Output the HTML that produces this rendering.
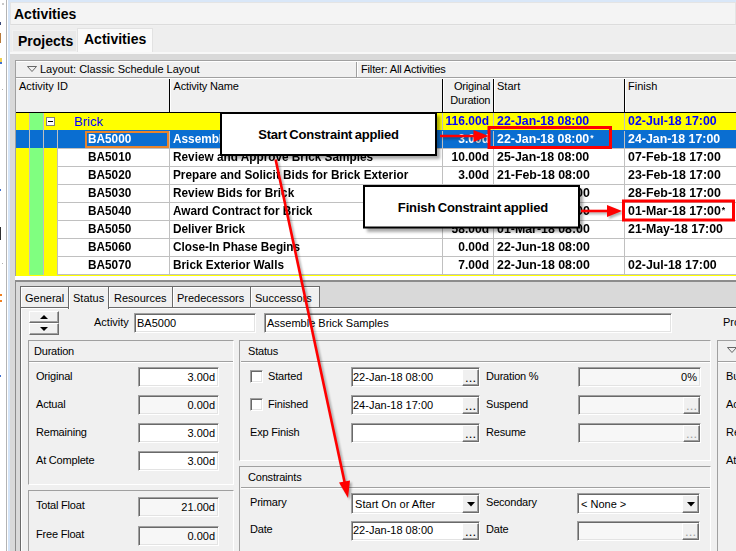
<!DOCTYPE html>
<html><head><meta charset="utf-8">
<style>
*{box-sizing:border-box;margin:0;padding:0}
html,body{width:736px;height:551px;overflow:hidden;background:#f0f0f0}
body{position:relative;font-family:"Liberation Sans",sans-serif;font-size:12px;color:#000}
.a{position:absolute}
.t{position:absolute;white-space:nowrap;line-height:14px}
.b{font-weight:bold}
.hl{position:absolute;height:1px}
.vl{position:absolute;width:1px}
.inp{position:absolute;background:#fff;border:1px solid;border-color:#a0a0a0 #fff #fff #a0a0a0;box-shadow:inset 1px 1px 0 #696969,inset -1px -1px 0 #e3e3e3}
.ro{background:#f7f7f7}
.btn{position:absolute;background:#f0f0f0;border:1px solid;border-color:#fff #6d6d6d #6d6d6d #fff;box-shadow:inset -1px -1px 0 #a0a0a0}
.grp{position:absolute;border:1px solid;border-color:#a0a0a0 #fff #fff #a0a0a0}
.row{position:absolute;left:58px;width:678px;height:18px;border-bottom:1px solid #c0c0c0;background:#fff}
.g{position:absolute;font-weight:bold;white-space:nowrap;line-height:14px;font-size:13px}
.gi,.gn{transform:scaleX(.907);transform-origin:0 0}.gt{transform:scaleX(.952);transform-origin:0 0}.gd{transform:scaleX(.925);transform-origin:100% 0}
.tab{background:#f0f0f0;border:1px solid #6a6a6a;box-shadow:inset 1px 1px 0 #fff}
.f{font-size:11px}
.r{text-align:right}
.l{letter-spacing:-0.2px}
.as{font-size:9px;position:relative;top:-2px;left:1px}
</style></head><body>
<!-- SECTION: chrome -->
<div class="a" style="left:0;top:0;width:8px;height:551px;background:#fff"></div>
<div class="a" style="left:6px;top:0;width:1px;height:551px;background:#b4b4b4"></div>
<div class="a" style="left:8px;top:0;width:2px;height:551px;background:#d5e5f8"></div>
<div class="a" style="left:10px;top:0;width:726px;height:2px;background:#d9e7f8"></div>
<div class="a" style="left:2px;top:3px;width:2px;height:2px;background:#c8c8c8"></div>
<div class="a" style="left:0;top:22px;width:1px;height:3px;background:#3a4a7a"></div>
<div class="a" style="left:0;top:33px;width:1px;height:10px;background:#b87a3a"></div>
<div class="a" style="left:0;top:58px;width:2px;height:4px;background:#f0d050"></div>
<div class="a" style="left:0;top:62px;width:2px;height:2px;background:#4070d0"></div>
<div class="a" style="left:2px;top:89px;width:1px;height:1px;background:#b0b0b0"></div>
<div class="a" style="left:0;top:189px;width:1px;height:2px;background:#4070d0"></div>
<div class="a" style="left:0;top:227px;width:1px;height:13px;background:#303030"></div>
<div class="a" style="left:2px;top:263px;width:1px;height:1px;background:#b0b0b0"></div>
<div class="a" style="left:0;top:294px;width:2px;height:2px;background:#f08020"></div>
<div class="a" style="left:0;top:300px;width:2px;height:2px;background:#f08020"></div>
<div class="a" style="left:0;top:375px;width:1px;height:2px;background:#4070d0"></div>
<div class="a" style="left:10px;top:2px;width:726px;height:23px;background:#f4f4f4;border:1px solid #e4e4e4;border-bottom-color:#dcdcdc"></div>
<div class="t b" style="left:14px;top:6px;font-size:14px;line-height:16px">Activities</div>
<!-- top tabs -->
<div class="a" style="left:10px;top:26px;width:726px;height:26px;background:#eeeeee"></div>
<div class="a" style="left:12px;top:30px;width:65px;height:22px;background:#e9e9e9;border:1px solid #f2f2f2"></div>
<div class="a" style="left:77px;top:28px;width:76px;height:25px;background:#fafafa;border:1px solid #e2e2e2;border-bottom:none"></div>
<div class="t b" style="left:18px;top:33px;font-size:14px;line-height:16px">Projects</div>
<div class="t b" style="left:84px;top:31px;font-size:14px;line-height:16px">Activities</div>
<!-- gray work area -->
<div class="a" style="left:10px;top:52px;width:726px;height:2px;background:#f8f8f8"></div>
<div class="a" style="left:10px;top:54px;width:726px;height:228px;background:#d9d9d9"></div>
<!-- SECTION: gridpanel -->
<div class="a" style="left:15px;top:60px;width:721px;height:217px;background:#f0f0f0;border-left:1px solid #a0a0a0;border-top:1px solid #a0a0a0"></div>
<div class="hl" style="left:16px;top:61px;width:720px;background:#fff"></div>
<div class="hl" style="left:16px;top:77px;width:720px;background:#a0a0a0"></div>
<div class="hl" style="left:16px;top:78px;width:720px;background:#fff"></div>
<div class="vl" style="left:356px;top:62px;height:15px;background:#a0a0a0"></div>
<div class="vl" style="left:357px;top:62px;height:15px;background:#fff"></div>
<svg class="a" style="left:26px;top:65px" width="12" height="8" viewBox="0 0 12 8"><path d="M1.5 1.5 L10.5 1.5 L6 6.5 Z" fill="none" stroke="#444" stroke-width="0.8"/></svg>
<div class="t f" style="left:40px;top:62px">Layout: Classic Schedule Layout</div>
<div class="t f" style="left:361px;top:62px;letter-spacing:-0.15px">Filter: All Activities</div>
<!-- header cells -->
<div class="vl" style="left:169px;top:79px;height:33px;background:#000"></div>
<div class="vl" style="left:442px;top:79px;height:33px;background:#000"></div>
<div class="vl" style="left:493px;top:79px;height:33px;background:#000"></div>
<div class="vl" style="left:624px;top:79px;height:33px;background:#000"></div>
<div class="vl" style="left:170px;top:79px;height:33px;background:#fff"></div>
<div class="vl" style="left:443px;top:79px;height:33px;background:#fff"></div>
<div class="vl" style="left:494px;top:79px;height:33px;background:#fff"></div>
<div class="vl" style="left:625px;top:79px;height:33px;background:#fff"></div>
<div class="hl" style="left:16px;top:112px;width:720px;background:#000"></div>
<div class="t f" style="left:19px;top:79px">Activity ID</div>
<div class="t f" style="left:173.5px;top:79px;letter-spacing:-0.15px">Activity Name</div>
<div class="t f l" style="left:390px;top:79px;width:100.3px;text-align:right">Original<br>Duration</div>
<div class="t f" style="left:497px;top:79px">Start</div>
<div class="t f" style="left:628px;top:79px">Finish</div>
<!-- SECTION: grid -->
<div class="a" style="left:16px;top:113px;width:720px;height:162px;background:#ffff00"></div>
<div class="a" style="left:30px;top:113px;width:14px;height:162px;background:#80ff80"></div>
<div class="vl" style="left:29px;top:113px;height:162px;background:#c0c0c0"></div>
<div class="vl" style="left:43px;top:113px;height:162px;background:#c0c0c0"></div>
<div class="vl" style="left:57px;top:131px;height:144px;background:#c0c0c0"></div>
<!-- brick row -->
<div class="a" style="left:46px;top:117px;width:9px;height:9px;background:#fff;border:1px solid #808080"></div>
<div class="a" style="left:48px;top:121px;width:5px;height:1px;background:#000"></div>
<div class="g" style="left:74px;top:115px;color:#0000ff;font-weight:normal;font-size:13px">Brick</div>
<div class="g gd" style="left:390px;top:114px;width:99px;text-align:right;color:#0000ff">116.00d</div>
<div class="g gt" style="left:497.3px;top:114px;color:#0000ff">22-Jan-18 08:00</div>
<div class="g gt" style="left:628.3px;top:114px;color:#0000ff">02-Jul-18 17:00</div>
<div class="vl" style="left:442px;top:113px;height:18px;background:#c0c0c0"></div>
<div class="vl" style="left:493px;top:113px;height:18px;background:#c0c0c0"></div>
<div class="vl" style="left:624px;top:113px;height:18px;background:#c0c0c0"></div>
<div class="a" style="left:16px;top:130px;width:720px;height:18px;background:#0a6ed1"></div>
<div class="hl" style="left:58px;top:148px;width:678px;background:#c0c0c0"></div>
<div class="g gi" style="left:88px;top:132px;color:#fff">BA5000</div><div class="g gn" style="left:173px;top:132px;color:#fff">Assemble Brick Samples</div><div class="g gd" style="left:390px;top:132px;width:99px;text-align:right;color:#fff">3.00d</div><div class="g gt" style="left:497.3px;top:132px;color:#fff">22-Jan-18 08:00<span class="as">*</span></div><div class="g gt" style="left:628.3px;top:132px;color:#fff">24-Jan-18 17:00</div>
<div class="a" style="left:58px;top:149px;width:678px;height:17px;background:#fff"></div>
<div class="hl" style="left:58px;top:166px;width:678px;background:#c0c0c0"></div>
<div class="g gi" style="left:88px;top:150px;color:#000">BA5010</div><div class="g gn" style="left:173px;top:150px;color:#000">Review and Approve Brick Samples</div><div class="g gd" style="left:390px;top:150px;width:99px;text-align:right;color:#000">10.00d</div><div class="g gt" style="left:497.3px;top:150px;color:#000">25-Jan-18 08:00</div><div class="g gt" style="left:628.3px;top:150px;color:#000">07-Feb-18 17:00</div>
<div class="a" style="left:58px;top:167px;width:678px;height:17px;background:#fff"></div>
<div class="hl" style="left:58px;top:184px;width:678px;background:#c0c0c0"></div>
<div class="g gi" style="left:88px;top:168px;color:#000">BA5020</div><div class="g gn" style="left:173px;top:168px;color:#000">Prepare and Solicit Bids for Brick Exterior</div><div class="g gd" style="left:390px;top:168px;width:99px;text-align:right;color:#000">3.00d</div><div class="g gt" style="left:497.3px;top:168px;color:#000">21-Feb-18 08:00</div><div class="g gt" style="left:628.3px;top:168px;color:#000">23-Feb-18 17:00</div>
<div class="a" style="left:58px;top:185px;width:678px;height:17px;background:#fff"></div>
<div class="hl" style="left:58px;top:202px;width:678px;background:#c0c0c0"></div>
<div class="g gi" style="left:88px;top:186px;color:#000">BA5030</div><div class="g gn" style="left:173px;top:186px;color:#000">Review Bids for Brick</div><div class="g gd" style="left:390px;top:186px;width:99px;text-align:right;color:#000">3.00d</div><div class="g gt" style="left:497.3px;top:186px;color:#000">26-Feb-18 08:00</div><div class="g gt" style="left:628.3px;top:186px;color:#000">28-Feb-18 17:00</div>
<div class="a" style="left:58px;top:203px;width:678px;height:17px;background:#fff"></div>
<div class="hl" style="left:58px;top:220px;width:678px;background:#c0c0c0"></div>
<div class="g gi" style="left:88px;top:204px;color:#000">BA5040</div><div class="g gn" style="left:173px;top:204px;color:#000">Award Contract for Brick</div><div class="g gd" style="left:390px;top:204px;width:99px;text-align:right;color:#000">1.00d</div><div class="g gt" style="left:497.3px;top:204px;color:#000">01-Mar-18 08:00</div><div class="g gt" style="left:628.3px;top:204px;color:#000">01-Mar-18 17:00<span class="as">*</span></div>
<div class="a" style="left:58px;top:221px;width:678px;height:17px;background:#fff"></div>
<div class="hl" style="left:58px;top:238px;width:678px;background:#c0c0c0"></div>
<div class="g gi" style="left:88px;top:222px;color:#000">BA5050</div><div class="g gn" style="left:173px;top:222px;color:#000">Deliver Brick</div><div class="g gd" style="left:390px;top:222px;width:99px;text-align:right;color:#000">58.00d</div><div class="g gt" style="left:497.3px;top:222px;color:#000">01-Mar-18 08:00</div><div class="g gt" style="left:628.3px;top:222px;color:#000">21-May-18 17:00</div>
<div class="a" style="left:58px;top:239px;width:678px;height:17px;background:#fff"></div>
<div class="hl" style="left:58px;top:256px;width:678px;background:#c0c0c0"></div>
<div class="g gi" style="left:88px;top:240px;color:#000">BA5060</div><div class="g gn" style="left:173px;top:240px;color:#000">Close-In Phase Begins</div><div class="g gd" style="left:390px;top:240px;width:99px;text-align:right;color:#000">0.00d</div><div class="g gt" style="left:497.3px;top:240px;color:#000">22-Jun-18 08:00</div><div class="g gt" style="left:628.3px;top:240px;color:#000"></div>
<div class="a" style="left:58px;top:257px;width:678px;height:17px;background:#fff"></div>
<div class="hl" style="left:58px;top:274px;width:678px;background:#c0c0c0"></div>
<div class="g gi" style="left:88px;top:258px;color:#000">BA5070</div><div class="g gn" style="left:173px;top:258px;color:#000">Brick Exterior Walls</div><div class="g gd" style="left:390px;top:258px;width:99px;text-align:right;color:#000">7.00d</div><div class="g gt" style="left:497.3px;top:258px;color:#000">22-Jun-18 08:00</div><div class="g gt" style="left:628.3px;top:258px;color:#000">02-Jul-18 17:00</div>
<div class="vl" style="left:29px;top:130px;height:18px;background:#c0c0c0"></div>
<div class="vl" style="left:43px;top:130px;height:18px;background:#c0c0c0"></div>
<div class="vl" style="left:57px;top:130px;height:18px;background:#c0c0c0"></div>
<div class="vl" style="left:169px;top:131px;height:144px;background:#c0c0c0"></div>
<div class="vl" style="left:442px;top:131px;height:144px;background:#c0c0c0"></div>
<div class="vl" style="left:493px;top:131px;height:144px;background:#c0c0c0"></div>
<div class="vl" style="left:624px;top:131px;height:144px;background:#c0c0c0"></div>
<div class="a" style="left:85px;top:131px;width:84px;height:17px;border:2px solid #e8842c"></div>
<div class="hl" style="left:16px;top:275px;width:720px;background:#ffff00"></div>
<!-- SECTION: details -->
<div class="hl" style="left:15px;top:276px;width:721px;height:4px;background:#fff"></div>
<div class="hl" style="left:15px;top:280px;width:721px;height:2px;background:#8c8c8c"></div>
<div class="a" style="left:10px;top:282px;width:726px;height:269px;background:#d9d9d9"></div>
<div class="a" style="left:15px;top:282px;width:1px;height:269px;background:#8c8c8c"></div>
<!-- tab page -->
<div class="a" style="left:20px;top:307px;width:716px;height:244px;background:#f0f0f0;border-left:1px solid #6a6a6a;border-top:1px solid #6a6a6a"></div>
<div class="a" style="left:21px;top:308px;width:715px;height:243px;border-left:1px solid #fff;border-top:1px solid #fff"></div>
<!-- tabs -->
<div class="a tab" style="left:20px;top:286px;width:49px;height:22px"></div>
<div class="a tab" style="left:108px;top:286px;width:65px;height:22px"></div>
<div class="a tab" style="left:172px;top:286px;width:79px;height:22px"></div>
<div class="a tab" style="left:250px;top:286px;width:70px;height:22px"></div>
<div class="a tab" style="left:68px;top:286px;width:41px;height:23px;border-bottom:none;z-index:2"></div>
<div class="t f" style="left:25px;top:291px">General</div>
<div class="t f" style="left:73px;top:291px;z-index:3">Status</div>
<div class="t f" style="left:114px;top:291px">Resources</div>
<div class="t f" style="left:177px;top:291px">Predecessors</div>
<div class="t f" style="left:255px;top:291px">Successors</div>
<!-- spinner -->
<div class="btn" style="left:29px;top:311px;width:30px;height:12px"></div>
<div class="btn" style="left:29px;top:323px;width:30px;height:12px"></div>
<svg class="a" style="left:39px;top:314px" width="10" height="18" viewBox="0 0 10 18"><path d="M1 5 L9 5 L5 1 Z M1 13 L9 13 L5 17 Z" fill="#000"/></svg>
<div class="t f" style="left:94px;top:315px">Activity</div>
<div class="inp" style="left:134px;top:313px;width:122px;height:20px"></div>
<div class="t f" style="left:137px;top:316px">BA5000</div>
<div class="inp" style="left:264px;top:313px;width:408px;height:20px"></div>
<div class="t f" style="left:267px;top:316px">Assemble Brick Samples</div>
<div class="t f" style="left:723px;top:315px">Pro</div>
<!-- Duration group -->
<div class="grp" style="left:28px;top:340px;width:206px;height:145px"></div>
<div class="hl" style="left:29px;top:361px;width:204px;background:#a0a0a0"></div>
<div class="hl" style="left:29px;top:362px;width:204px;background:#fff"></div>
<div class="t f l" style="left:34px;top:344px">Duration</div>
<div class="t f l" style="left:36px;top:369px">Original</div>
<div class="t f l" style="left:36px;top:397px">Actual</div>
<div class="t f l" style="left:36px;top:425px">Remaining</div>
<div class="t f l" style="left:36px;top:453px">At Complete</div>
<div class="inp" style="left:138px;top:367px;width:81px;height:20px"></div>
<div class="inp ro" style="left:138px;top:395px;width:81px;height:20px"></div>
<div class="inp" style="left:138px;top:423px;width:81px;height:20px"></div>
<div class="inp" style="left:138px;top:451px;width:81px;height:20px"></div>
<div class="t f r" style="left:138px;top:370px;width:77px">3.00d</div>
<div class="t f r" style="left:138px;top:398px;width:77px">0.00d</div>
<div class="t f r" style="left:138px;top:426px;width:77px">3.00d</div>
<div class="t f r" style="left:138px;top:454px;width:77px">3.00d</div>
<!-- Float group -->
<div class="grp" style="left:28px;top:490px;width:206px;height:70px"></div>
<div class="t f l" style="left:36px;top:498px">Total Float</div>
<div class="t f l" style="left:36px;top:527px">Free Float</div>
<div class="inp ro" style="left:138px;top:497px;width:81px;height:20px"></div>
<div class="inp ro" style="left:138px;top:526px;width:81px;height:20px"></div>
<div class="t f r" style="left:138px;top:500px;width:77px">21.00d</div>
<div class="t f r" style="left:138px;top:529px;width:77px">0.00d</div>
<!-- Status group -->
<div class="grp" style="left:239px;top:340px;width:472px;height:121px"></div>
<div class="hl" style="left:241px;top:361px;width:469px;background:#a0a0a0"></div>
<div class="hl" style="left:241px;top:362px;width:469px;background:#fff"></div>
<div class="t f l" style="left:248px;top:344px">Status</div>
<div class="inp" style="left:250px;top:370px;width:13px;height:13px"></div>
<div class="inp" style="left:250px;top:398px;width:13px;height:13px"></div>
<div class="t f l" style="left:268px;top:369px">Started</div>
<div class="t f l" style="left:268px;top:397px">Finished</div>
<div class="t f l" style="left:250px;top:425px">Exp Finish</div>
<div class="inp" style="left:351px;top:367px;width:129px;height:20px"></div>
<div class="inp" style="left:351px;top:395px;width:129px;height:20px"></div>
<div class="inp" style="left:351px;top:423px;width:129px;height:20px"></div>
<div class="btn" style="left:462px;top:369px;width:17px;height:17px"></div>
<div class="btn" style="left:462px;top:397px;width:17px;height:17px"></div>
<div class="btn" style="left:462px;top:425px;width:17px;height:17px"></div>
<div class="t f" style="left:465px;top:371px;font-size:13px;letter-spacing:0.1px">...</div>
<div class="t f" style="left:465px;top:399px;font-size:13px;letter-spacing:0.1px">...</div>
<div class="t f" style="left:465px;top:427px;font-size:13px;letter-spacing:0.1px">...</div>
<div class="t f" style="left:353px;top:370px">22-Jan-18 08:00</div>
<div class="t f" style="left:353px;top:398px">24-Jan-18 17:00</div>
<div class="t f l" style="left:486px;top:369px">Duration %</div>
<div class="t f l" style="left:486px;top:397px">Suspend</div>
<div class="t f l" style="left:486px;top:425px">Resume</div>
<div class="inp ro" style="left:578px;top:367px;width:123px;height:20px"></div>
<div class="inp ro" style="left:578px;top:395px;width:123px;height:20px"></div>
<div class="inp ro" style="left:578px;top:423px;width:123px;height:20px"></div>
<div class="t f r" style="left:578px;top:370px;width:119px">0%</div>
<div class="btn" style="left:683px;top:397px;width:17px;height:17px"></div>
<div class="btn" style="left:683px;top:425px;width:17px;height:17px"></div>
<div class="t f" style="left:686px;top:399px;font-size:13px;letter-spacing:0.1px;color:#a0a0a0">...</div>
<div class="t f" style="left:686px;top:427px;font-size:13px;letter-spacing:0.1px;color:#a0a0a0">...</div>
<!-- Constraints group -->
<div class="grp" style="left:239px;top:466px;width:472px;height:95px"></div>
<div class="hl" style="left:241px;top:487px;width:469px;background:#a0a0a0"></div>
<div class="hl" style="left:241px;top:488px;width:469px;background:#fff"></div>
<div class="t f l" style="left:248px;top:470px">Constraints</div>
<div class="t f l" style="left:250px;top:495px">Primary</div>
<div class="t f l" style="left:250px;top:522px">Date</div>
<div class="inp" style="left:351px;top:493px;width:129px;height:21px"></div>
<div class="btn" style="left:462px;top:495px;width:17px;height:18px"></div>
<svg class="a" style="left:467px;top:502px" width="8" height="5" viewBox="0 0 8 5"><path d="M0 0 L8 0 L4 4.5 Z" fill="#000"/></svg>
<div class="t f" style="left:355px;top:497px;letter-spacing:0.05px">Start On or After</div>
<div class="inp" style="left:351px;top:521px;width:129px;height:20px"></div>
<div class="btn" style="left:462px;top:523px;width:17px;height:17px"></div>
<div class="t f" style="left:465px;top:525px;font-size:13px;letter-spacing:0.1px">...</div>
<div class="t f" style="left:353px;top:523px">22-Jan-18 08:00</div>
<div class="t f l" style="left:486px;top:495px">Secondary</div>
<div class="t f l" style="left:486px;top:522px">Date</div>
<div class="inp" style="left:577px;top:493px;width:123px;height:21px"></div>
<div class="btn" style="left:682px;top:495px;width:17px;height:18px"></div>
<svg class="a" style="left:687px;top:502px" width="8" height="5" viewBox="0 0 8 5"><path d="M0 0 L8 0 L4 4.5 Z" fill="#000"/></svg>
<div class="t f" style="left:581px;top:497px">&lt; None &gt;</div>
<div class="inp ro" style="left:577px;top:521px;width:123px;height:20px"></div>
<div class="btn" style="left:682px;top:523px;width:17px;height:17px"></div>
<div class="t f" style="left:685px;top:525px;font-size:13px;letter-spacing:0.1px;color:#a0a0a0">...</div>
<!-- right group -->
<div class="grp" style="left:717px;top:340px;width:30px;height:220px"></div>
<div class="hl" style="left:718px;top:361px;width:18px;background:#a0a0a0"></div>
<div class="hl" style="left:718px;top:362px;width:18px;background:#fff"></div>
<svg class="a" style="left:726px;top:346px" width="12" height="8" viewBox="0 0 12 8"><path d="M1.5 1.5 L10.5 1.5 L6 6.5 Z" fill="none" stroke="#444" stroke-width="0.8"/></svg>
<div class="t f" style="left:726px;top:369px">Bu</div>
<div class="t f" style="left:726px;top:397px">Ac</div>
<div class="t f" style="left:726px;top:425px">Re</div>
<div class="t f" style="left:726px;top:453px">At</div>
<!-- SECTION: overlays -->
<svg class="a" style="left:0;top:0;z-index:10" width="736" height="551" viewBox="0 0 736 551">
<defs><filter id="sh" x="-5%" y="-10%" width="115%" height="130%"><feGaussianBlur stdDeviation="1.8"/></filter>
<filter id="sh2" x="-20%" y="-20%" width="140%" height="140%"><feGaussianBlur stdDeviation="1"/></filter></defs>
<!-- arrow shadows -->
<g opacity="0.3" filter="url(#sh2)" transform="translate(2,2)">
<line x1="275.6" y1="159.5" x2="345" y2="484" stroke="#000" stroke-width="2.6"/>
<path d="M348 498 L339 482.5 L350 480.5 Z" fill="#000"/>
<line x1="440" y1="136" x2="476" y2="136" stroke="#000" stroke-width="2.6"/>
<path d="M488.5 136 L473.5 130 L473.5 142 Z" fill="#000"/>
<line x1="581" y1="211" x2="609" y2="211" stroke="#000" stroke-width="2.6"/>
<path d="M622 211 L607 205 L607 217 Z" fill="#000"/>
</g>
<!-- long arrow -->
<line x1="275.6" y1="159.5" x2="345" y2="484" stroke="#ff0000" stroke-width="2.6"/>
<path d="M348 498 L339 482.5 L350 480.5 Z" fill="#ff0000"/>
<!-- callout 1 -->
<rect x="224" y="116" width="216" height="43" fill="#000" opacity="0.33" filter="url(#sh)"/>
<rect x="221" y="113" width="215" height="42" fill="#fff" stroke="#000" stroke-width="2"/>
<text x="328.5" y="138.6" text-anchor="middle" font-family="Liberation Sans, sans-serif" font-weight="bold" font-size="13" letter-spacing="-0.2" word-spacing="-1">Start Constraint applied</text>
<!-- arrow 1 -->
<line x1="440" y1="136" x2="476" y2="136" stroke="#ff0000" stroke-width="2.6"/>
<path d="M488.5 136 L473.5 130 L473.5 142 Z" fill="#ff0000"/>
<rect x="489" y="127.5" width="121.5" height="20" fill="none" stroke="#ff0000" stroke-width="3"/>
<!-- callout 2 -->
<rect x="367" y="189" width="216" height="43" fill="#000" opacity="0.33" filter="url(#sh)"/>
<rect x="364" y="186" width="215" height="41.5" fill="#fff" stroke="#000" stroke-width="2"/>
<text x="473" y="212.2" text-anchor="middle" font-family="Liberation Sans, sans-serif" font-weight="bold" font-size="13" letter-spacing="-0.15" word-spacing="-1">Finish Constraint applied</text>
<line x1="581" y1="211" x2="609" y2="211" stroke="#ff0000" stroke-width="2.6"/>
<path d="M622 211 L607 205 L607 217 Z" fill="#ff0000"/>
<rect x="623.5" y="201" width="110" height="19" fill="none" stroke="#ff0000" stroke-width="3"/>
</svg>
</body></html>
